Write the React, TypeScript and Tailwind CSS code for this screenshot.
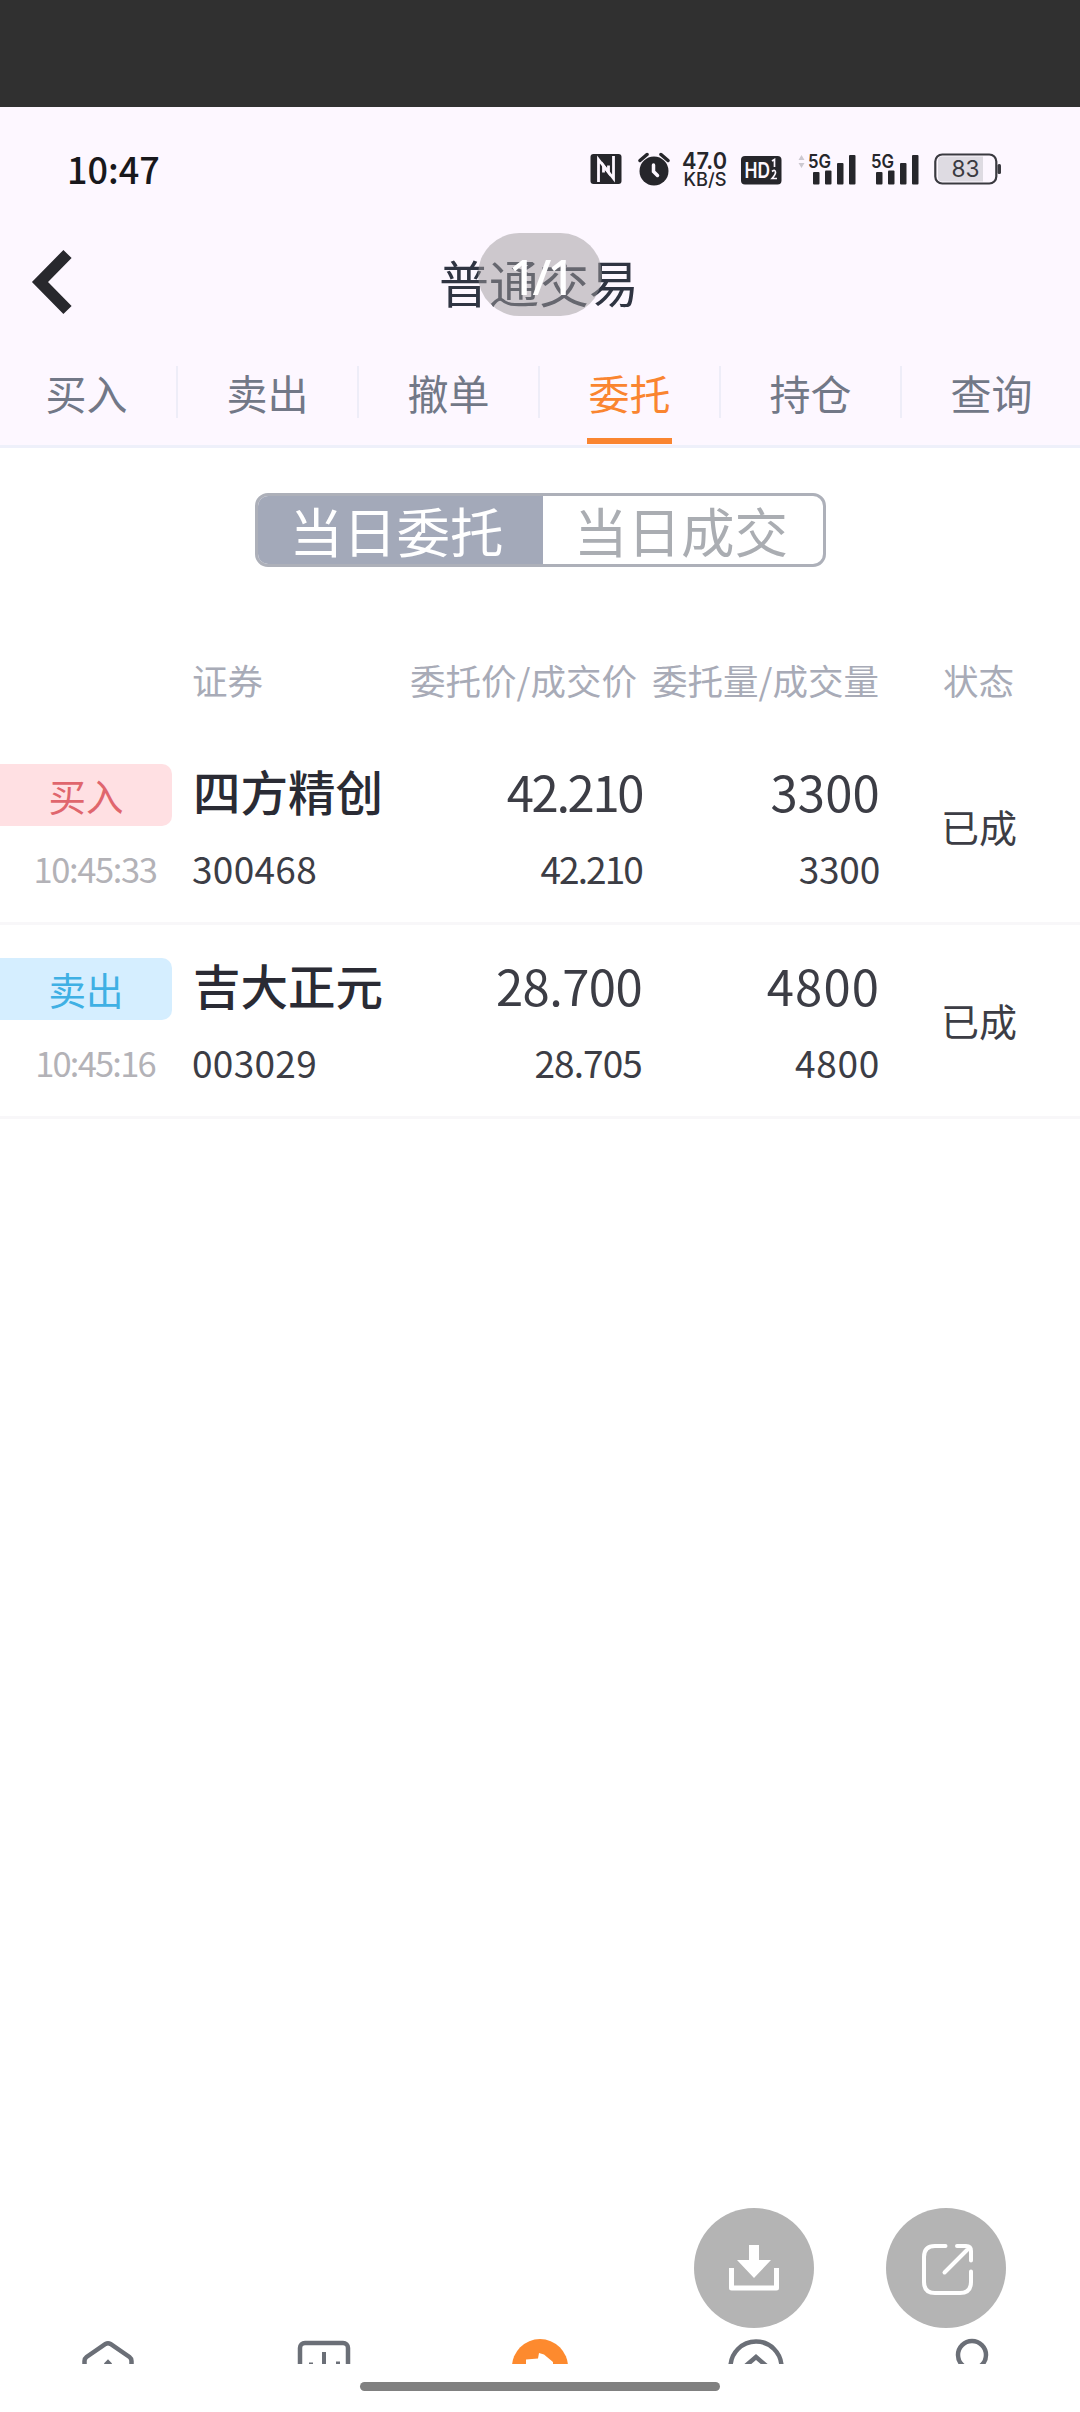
import type { ReactNode } from 'react';

const tabs = ['买入', '卖出', '撤单', '委托', '持仓', '查询'];

type Order = {
  side: string;
  badge: string;
  time: string;
  timeClass: string;
  name: string;
  code: string;
  price: string;
  priceClass: string;
  dealPrice: string;
  dealPriceClass: string;
  amount: string;
  amountClass: string;
  dealAmount: string;
  dealAmountClass: string;
};

const orders: Order[] = [
  {
    side: '买入',
    badge: 'bg-[#ffe0e3] text-[#e0666d]',
    time: '10:45:33',
    timeClass: 'tracking-[-1.4px]',
    name: '四方精创',
    code: '300468',
    price: '42.210',
    priceClass: 'tracking-[-2.4px]',
    dealPrice: '42.210',
    dealPriceClass: 'tracking-[-1.9px]',
    amount: '3300',
    amountClass: 'tracking-[0.2px]',
    dealAmount: '3300',
    dealAmountClass: 'tracking-[-0.2px]',
  },
  {
    side: '卖出',
    badge: 'bg-[#d5eeff] text-[#3fb0e4]',
    time: '10:45:16',
    timeClass: 'tracking-[-1.8px]',
    name: '吉大正元',
    code: '003029',
    price: '28.700',
    priceClass: 'tracking-[-0.6px]',
    dealPrice: '28.705',
    dealPriceClass: 'tracking-[-0.9px]',
    amount: '4800',
    amountClass: 'tracking-[1.1px]',
    dealAmount: '4800',
    dealAmountClass: 'tracking-[0.7px]',
  },
];

function Signal() {
  return (
    <svg className="overflow-visible" width="50" height="34" viewBox="0 0 50 34" fill="#26262b">
      <text x="0" y="15.5" fontSize="18.5" fontWeight="600" textLength="23" lengthAdjust="spacingAndGlyphs">5G</text>
      <rect x="5" y="20" width="6.5" height="12.5" rx="1" />
      <rect x="17" y="18.5" width="6.5" height="14" rx="1" />
      <rect x="29" y="11" width="6.5" height="21.5" rx="1" />
      <rect x="41" y="3" width="6.5" height="29.5" rx="1" />
    </svg>
  );
}

function StatusBar() {
  return (
    <div className="flex h-[126px] items-center justify-between pr-[78px] pl-[67px]">
      <span className="-mt-[5px] text-[36px] font-medium text-[#18181c]">10:47</span>
      <div className="-mt-[2px] flex h-[34px] items-center font-['Inter',sans-serif]">
        <svg width="32" height="32" viewBox="0 0 32 32">
          <rect x="0.5" y="1" width="31" height="30" rx="3" fill="#26262b" />
          <path d="M8.500 29V6.500L18.500 19.500V12.500" fill="none" stroke="#fdf7ff" strokeWidth="2.800" />
          <path d="M23.500 3V25.500L13.500 12.500V19.500" fill="none" stroke="#fdf7ff" strokeWidth="2.800" />
        </svg>
        <svg className="ml-4" width="32" height="34" viewBox="0 0 32 34">
          <circle cx="16" cy="19" r="14.500" fill="#26262b" />
          <path d="M2 8.500L9 2.500M30 8.500L23 2.500" stroke="#26262b" strokeWidth="3.500" strokeLinecap="round" />
          <path d="M15.500 13V19.500L19.500 23.500" fill="none" stroke="#fdf7ff" strokeWidth="3.500" strokeLinecap="round" />
        </svg>
        <svg className="ml-3 overflow-visible" width="46" height="38" viewBox="0 0 46 38" fill="#26262b">
          <text x="0" y="18.500" fontSize="23.500" fontWeight="600" textLength="45" lengthAdjust="spacingAndGlyphs">47.0</text>
          <text x="1.500" y="36" fontSize="18" fontWeight="500" textLength="43" lengthAdjust="spacingAndGlyphs">KB/S</text>
        </svg>
        <svg className="ml-[13px] overflow-visible" width="41" height="34" viewBox="0 0 41 34">
          <rect x="0" y="4" width="40.500" height="28.500" rx="4" fill="#26262b" />
          <text x="3.500" y="26" fontSize="21.500" fontWeight="600" fill="#fdf7ff" textLength="25.500" lengthAdjust="spacingAndGlyphs">HD</text>
          <path d="M31 9L33.500 7.500V15M31 19.500Q34.500 17 34.500 20.500Q34.500 22.500 31 26.500H36" fill="none" stroke="#fdf7ff" strokeWidth="1.700" />
        </svg>
        <svg className="ml-4" width="7" height="34" viewBox="0 0 7 34" fill="#ccc8d0">
          <path d="M3.500 3L6.500 8H0.500ZM3.500 16L0.500 11H6.500Z" />
        </svg>
        <div className="ml-[3px] flex gap-[13px]">
          <Signal />
          <Signal />
        </div>
        <svg className="ml-[13px] overflow-visible" width="68" height="34" viewBox="0 0 68 34">
          <rect x="1.300" y="2.500" width="61" height="29" rx="7" fill="#fdf7ff" stroke="#3a3a40" strokeWidth="2.200" />
          <path d="M8 4.500H49V29.500H8A4 4 0 0 1 4 25.500V8.500A4 4 0 0 1 8 4.500Z" fill="#dedbe2" />
          <rect x="63.500" y="12" width="3.500" height="10" rx="1.500" fill="#3a3a40" />
          <text x="17.500" y="25" fontSize="22.500" fill="#3a3a40" textLength="28" lengthAdjust="spacingAndGlyphs">83</text>
        </svg>
      </div>
    </div>
  );
}

function NavItem({ children }: { children: ReactNode }) {
  return (
    <div className="flex justify-center">
      <svg width="64" height="28" viewBox="0 0 64 28" fill="none" stroke="#6b6f77" strokeWidth="4.500">
        {children}
      </svg>
    </div>
  );
}

export default function App() {
  return (
    <div
      className="relative flex h-[2412px] w-[1080px] flex-col overflow-hidden bg-white font-['Noto_Sans_CJK_SC',sans-serif]"
      lang="zh-CN"
    >
      <div className="h-[107px] shrink-0 bg-[#303030]" />

      <header className="h-[341px] shrink-0 overflow-hidden border-b-[3px] border-[#eef0fa] bg-[#fdf7ff]">
        <StatusBar />
        <div className="relative flex h-[100px] items-center justify-center">
          <svg className="absolute top-[16px] left-[30px]" width="44" height="68" viewBox="0 0 44 68">
            <path d="M37.500 5L10 33L37.500 61" fill="none" stroke="#28282d" strokeWidth="11.500" />
          </svg>
          <h1 className="-mt-[5px] -ml-[2px] text-[50px] leading-[56px] text-[#2f3442]">普通交易</h1>
          <div className="absolute top-0 left-[478px] flex h-[83px] w-[124px] items-center justify-center rounded-full bg-[#9d999b]/50 pt-[4px] font-['Noto_Sans'] text-[49px] font-medium tracking-[-4px] text-white">
            1/1
          </div>
        </div>
        <nav className="-ml-1 flex h-[112px] w-[1090px]">
          {tabs.map((tab, i) => (
            <div key={tab} className="flex w-[181px] shrink-0 flex-col items-center">
              <div className="mt-[33px] flex h-[52px] w-full items-center">
                <span
                  className={
                    i === 3
                      ? 'flex-1 text-center text-[41px] leading-[53px] text-[#fa8530]'
                      : 'flex-1 text-center text-[41px] leading-[53px] text-[#727887]'
                  }
                >
                  {tab}
                </span>
                {i < 5 && <span className="-mr-[1px] -ml-[1px] h-full w-[2px] bg-[#eeedf8]" />}
              </div>
              {i === 3 && <div className="mt-[20px] h-[6px] w-[85px] bg-[#fa8530]" />}
            </div>
          ))}
        </nav>
      </header>

      <main className="flex-1">
        <div className="mx-auto mt-[45px] flex h-[74px] w-[571px] overflow-hidden rounded-[13px] border-[3px] border-[#adb0b9] text-[53.500px] leading-[68px]">
          <div className="w-[285px] bg-[#a3a9b9] pr-[7px] text-center text-white">当日委托</div>
          <div className="flex-1 pr-[3px] text-center text-[#aaadb2]">当日成交</div>
        </div>

        <div className="mt-[89px] grid h-[48px] grid-cols-[192px_219px_226px_242px_201px] text-[35.500px] leading-[48px] whitespace-nowrap text-[#a8abb7]">
          <span className="col-start-2">证券</span>
          <span className="flex justify-end">委托价/成交价</span>
          <span className="flex justify-end">委托量/成交量</span>
          <span className="pr-[2px] text-center">状态</span>
        </div>

        <div className="mt-[27px]">
          {orders.map((o) => (
            <div
              key={o.code}
              className="grid h-[194px] grid-cols-[172px_20px_220px_230px_238px_200px] border-b-[3px] border-[#f8f7f9] pt-[33px] text-[#3c3d45]"
            >
              <div className="flex flex-col">
                <span className={`h-[62px] rounded-r-[10px] text-center text-[37.500px] leading-[62px] ${o.badge}`}>{o.side}</span>
                <span className={`mt-[22px] pl-[18px] text-center text-[34.500px] leading-[40px] text-[#b3b2b7] ${o.timeClass}`}>{o.time}</span>
              </div>
              <div className="col-start-3 flex flex-col">
                <span className="h-[62px] pl-px text-[47.500px] leading-[54px] font-medium text-[#2a2b34]">{o.name}</span>
                <span className="mt-[22px] text-[37px] leading-[40px] tracking-[0.3px]">{o.code}</span>
              </div>
              <div className="flex flex-col text-right">
                <span className={`h-[62px] text-[49px] leading-[54px] ${o.priceClass}`}>{o.price}</span>
                <span className={`mt-[22px] text-[37px] leading-[40px] ${o.dealPriceClass}`}>{o.dealPrice}</span>
              </div>
              <div className="flex flex-col text-right">
                <span className={`h-[62px] text-[49px] leading-[54px] ${o.amountClass}`}>{o.amount}</span>
                <span className={`mt-[22px] text-[37px] leading-[40px] ${o.dealAmountClass}`}>{o.dealAmount}</span>
              </div>
              <div className="pt-[36px] pr-[2px] text-center text-[38px] leading-[52px]">已成</div>
            </div>
          ))}
        </div>
      </main>

      <footer className="shrink-0">
        <nav className="grid h-[28px] grid-cols-5">
          <NavItem>
            <path d="M8.500 36V25Q8.500 22.500 10.500 21L29.500 8Q32 6.500 34.500 8L53.500 21Q55.500 22.500 55.500 25V36" />
            <path d="M29.500 29L32 26.500L34.500 29" />
          </NavItem>
          <NavItem>
            <rect x="8" y="7" width="48" height="47" rx="5" />
            <path d="M32 16V32M19 26.500V32M46 25.500V32" strokeWidth="4" />
          </NavItem>
          <NavItem>
            <circle cx="32" cy="31" r="28" fill="#fd8a2e" stroke="none" />
            <path d="M18 23.500L30 22.500L31 17L36 18.500L45 26V28H18Z" fill="#fff" stroke="none" />
          </NavItem>
          <NavItem>
            <circle cx="32" cy="31" r="25.500" />
            <path d="M18 33L32 21L46 33" />
          </NavItem>
          <NavItem>
            <circle cx="32" cy="19" r="14" />
          </NavItem>
        </nav>
        <div className="flex h-12 justify-center pt-[18px]">
          <div className="h-[9px] w-[360px] rounded-full bg-[#808080]" />
        </div>
      </footer>

      <div className="absolute top-[2208px] left-[694px] flex gap-[72px]">
        <button className="h-[120px] w-[120px] rounded-full bg-[#b4b4b4]">
          <svg width="120" height="120" viewBox="0 0 120 120">
            <path d="M55 37H65V52H77L60 70L43 52H55Z" fill="#fff" />
            <path d="M37.500 60V80H82.500V60" fill="none" stroke="#fff" strokeWidth="5" strokeLinejoin="round" />
          </svg>
        </button>
        <button className="h-[120px] w-[120px] rounded-full bg-[#b4b4b4]">
          <svg
            width="120"
            height="120"
            viewBox="0 0 120 120"
            fill="none"
            stroke="#fff"
            strokeWidth="4"
            strokeLinecap="round"
            strokeLinejoin="round"
          >
            <path d="M59.500 38H49Q38 38 38 49V74Q38 85 49 85H74Q85 85 85 74V63.500" />
            <path d="M71 38H80Q85 38 85 43V52.500M83.500 39.500L58.500 64.500" />
          </svg>
        </button>
      </div>
    </div>
  );
}
